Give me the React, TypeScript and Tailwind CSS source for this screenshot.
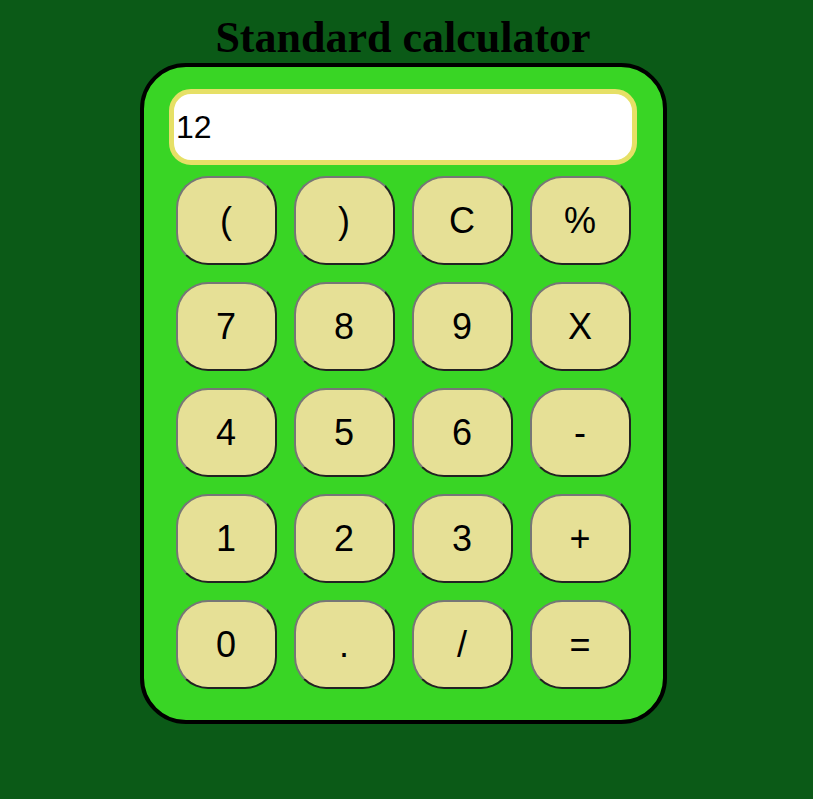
const keys = ['(', ')', 'C', '%', '7', '8', '9', 'X', '4', '5', '6', '-', '1', '2', '3', '+', '0', '.', '/', '='];

export default function App() {
  return (
    <div className="min-h-[799px] w-full bg-[#0b5a17]">
      <div className="flex w-[806px] flex-col items-center pt-[10px]">
        <h1 className="text-[44px] font-bold leading-[56px] text-black [font-family:'Liberation_Serif',serif]">
          Standard calculator
        </h1>
        {/* calculator body */}
        <div className="mt-[-3px] flex h-[661px] w-[527px] flex-col items-center rounded-[46px] border-4 border-black bg-[#39d525] pt-[22px]">
          <input
            readOnly
            value="12"
            className="h-[76px] w-[468px] rounded-[22px] border-[5px] border-[#e6e066] bg-white px-[2px] text-[32px] text-black outline-none [font-family:'Liberation_Sans',sans-serif]"
          />
          <div className="mt-[11px] grid grid-cols-[repeat(4,101px)] gap-x-[17px] gap-y-[17px]">
            {keys.map((k) => (
              <button
                key={k}
                className="h-[89px] w-[101px] rounded-[32px] border-2 border-t-[#767676] border-l-[#767676] border-r-[#222] border-b-[#222] bg-[#e6e096] text-[36px] text-black [font-family:'Liberation_Sans',sans-serif]"
              >
                {k}
              </button>
            ))}
          </div>
        </div>
      </div>
    </div>
  );
}
